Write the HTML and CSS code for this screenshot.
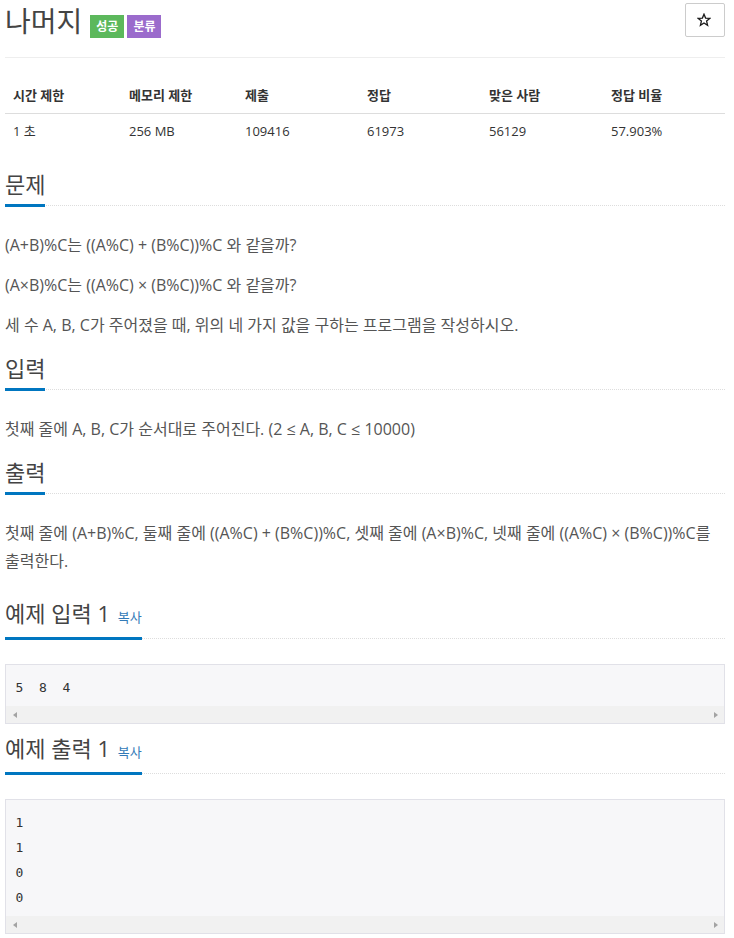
FILE: index.html
```html
<!DOCTYPE html>
<html lang="ko">
<head>
<meta charset="utf-8">
<title>나머지</title>
<link rel="stylesheet" href="styles.css">
</head>
<body>
<div class="page">
  <div class="page-header">
    <h1 class="title">나머지
      <span class="badges"><span class="badge badge-ok">성공</span><span class="badge badge-cat">분류</span></span>
    </h1>
    <button class="star" type="button" aria-label="즐겨찾기"><svg width="14" height="14" viewBox="0 0 14 14"><polygon points="7,1.2 8.6,5.1 12.8,5.4 9.6,8.1 10.6,12.3 7,10 3.4,12.3 4.4,8.1 1.2,5.4 5.4,5.1" fill="none" stroke="#1a1a1a" stroke-width="1.3" stroke-linejoin="miter"/></svg></button>
  </div>

  <table class="info">
    <thead>
      <tr><th class="c-narrow">시간 제한</th><th class="c-narrow">메모리 제한</th><th>제출</th><th>정답</th><th>맞은 사람</th><th>정답 비율</th></tr>
    </thead>
    <tbody>
      <tr><td>1 초</td><td>256 MB</td><td>109416</td><td>61973</td><td>56129</td><td>57.903%</td></tr>
    </tbody>
  </table>

  <section class="section">
    <div class="headline"><h2>문제</h2></div>
    <div class="text">
      <p>(A+B)%C는 ((A%C) + (B%C))%C 와 같을까?</p>
      <p>(A×B)%C는 ((A%C) × (B%C))%C 와 같을까?</p>
      <p>세 수 A, B, C가 주어졌을 때, 위의 네 가지 값을 구하는 프로그램을 작성하시오.</p>
    </div>
  </section>

  <section class="section">
    <div class="headline"><h2>입력</h2></div>
    <div class="text">
      <p>첫째 줄에 A, B, C가 순서대로 주어진다. (2 ≤ A, B, C ≤ 10000)</p>
    </div>
  </section>

  <section class="section">
    <div class="headline"><h2>출력</h2></div>
    <div class="text">
      <p>첫째 줄에 (A+B)%C, 둘째 줄에 ((A%C) + (B%C))%C, 셋째 줄에 (A×B)%C, 넷째 줄에 ((A%C) × (B%C))%C를 출력한다.</p>
    </div>
  </section>

  <div class="samples">
    <section class="sample-section">
      <div class="headline"><h2>예제 입력 1 <a class="copy">복사</a></h2></div>
      <div class="sample">
<pre>5  8  4</pre>
        <div class="hscroll"><span class="arrow arrow-left"></span><span class="arrow arrow-right"></span></div>
      </div>
    </section>

    <section class="sample-section">
      <div class="headline"><h2>예제 출력 1 <a class="copy">복사</a></h2></div>
      <div class="sample">
<pre>1
1
0
0</pre>
        <div class="hscroll"><span class="arrow arrow-left"></span><span class="arrow arrow-right"></span></div>
      </div>
    </section>
  </div>
</div>
</body>
</html>
```
FILE: styles.css
```css
* { box-sizing: border-box; }

body {
  margin: 0;
  background: #fff;
  color: #333;
  font-family: "Open Sans", "Noto Sans CJK KR", sans-serif;
}

.page {
  width: 720px;
  margin-left: 5px;
}

.page-header {
  display: flex;
  justify-content: space-between;
  align-items: flex-start;
  height: 58px;
  border-bottom: 1px solid #eee;
}

.title {
  display: flex;
  align-items: flex-start;
  margin: 0;
  font-size: 28px;
  font-weight: 400;
  line-height: 42px;
  color: #444;
}

.badges {
  display: flex;
  gap: 3px;
  margin: 15px 0 0 8px;
}

.badge {
  font-size: 12px;
  font-weight: 700;
  color: #fff;
  line-height: 23px;
  padding: 0 6px;
}

.badge-ok { background: #5cb85c; }
.badge-cat { background: #9b6bcc; }

.star {
  margin-top: 3px;
  width: 40px;
  height: 34px;
  padding: 0;
  border: 1px solid #ccc;
  border-radius: 2px;
  background: #fff;
  display: flex;
  align-items: center;
  justify-content: center;
}

.star svg { display: block; margin-left: -2px; margin-top: -1px; }

.info {
  width: 100%;
  table-layout: fixed;
  border-collapse: collapse;
  margin: 20px 0 23px;
  font-size: 13px;
  line-height: 18.6px;
}

.info th {
  width: 122px;
  text-align: left;
  font-weight: 700;
  padding: 8px;
  border-bottom: 1px solid #ddd;
}

.info th.c-narrow { width: 116px; }

.info td { padding: 8px; }

.section { margin-bottom: 16px; }

.headline {
  display: flex;
  border-bottom: 1px dotted #ddd;
  margin-bottom: 25px;
}

.headline h2 {
  margin: 0 0 -2px;
  padding-bottom: 7px;
  border-bottom: 3px solid #0076c0;
  font-size: 22px;
  font-weight: 400;
  line-height: 26px;
  color: #444;
}

.copy {
  margin-left: 2px;
  font-size: 13px;
  color: #337ab7;
}

.text p {
  margin: 0 0 12px;
  font-size: 16px;
  line-height: 28px;
  color: #555;
}

.samples { margin-top: 25px; }

.sample-section { margin-bottom: 11px; }

.sample {
  border: 1px solid #e1e1e8;
  background: #f7f7f9;
}

.sample pre {
  margin: 0;
  padding: 9.5px 9.5px 6.5px;
  font: 13px/25px "DejaVu Sans Mono", monospace;
  color: #333;
}

.hscroll {
  display: flex;
  justify-content: space-between;
  align-items: center;
  height: 17px;
  padding: 0 6px 0 7px;
  background: #f1f1f1;
}

.arrow {
  width: 0;
  height: 0;
  border-top: 3.5px solid transparent;
  border-bottom: 3.5px solid transparent;
}

.arrow-left { border-right: 4px solid #a3a3a3; }
.arrow-right { border-left: 4px solid #a3a3a3; }
```
